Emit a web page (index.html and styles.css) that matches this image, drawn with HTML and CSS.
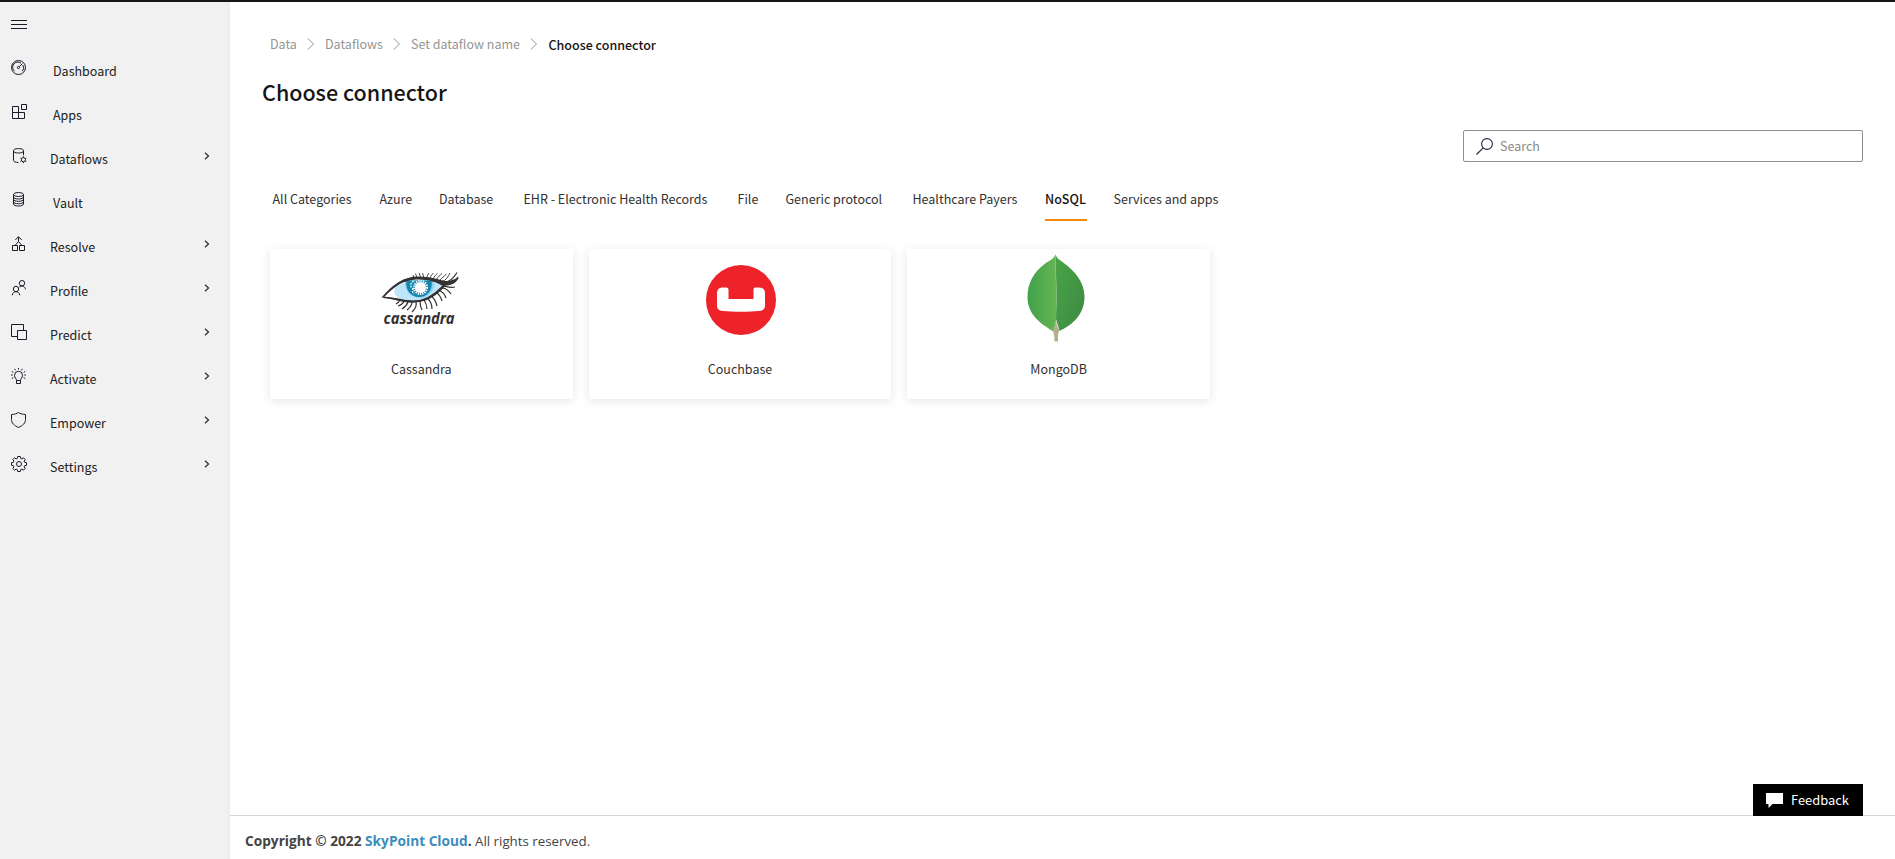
FILE: index.html
```html
<!DOCTYPE html>
<html lang="en">
<head>
<meta charset="utf-8">
<title>Choose connector</title>
<link rel="stylesheet" href="styles.css">
</head>
<body>
<div class="app">
  <aside class="sidebar">
    <div class="menu-toggle">
      <svg class="icon" viewBox="0 0 16 16"><path d="M0 3.500h16M0 7.500h16M0 11.500h16"/></svg>
    </div>
    <nav class="nav">
      <a class="nav-item leaf">
        <svg class="icon" viewBox="0 0 16 16"><circle cx="7.500" cy="7.500" r="7"/><path d="M3.600 11.200A5 5 0 0 1 10 3.200M11.800 5A5 5 0 0 1 11.400 11.200M8.300 6.700l3-3"/><circle cx="7.500" cy="7.500" r="1.100"/></svg>
        <span class="label">Dashboard</span>
      </a>
      <a class="nav-item leaf">
        <svg class="icon" viewBox="0 0 16 16"><path d="M1.500 2.500h6v12h-6zM1.500 8.500h12v6h-12M10.500.5h5v5h-5z"/></svg>
        <span class="label">Apps</span>
      </a>
      <a class="nav-item">
        <svg class="icon" viewBox="0 0 16 16"><ellipse cx="7.500" cy="2.800" rx="5" ry="2.200"/><path d="M2.500 2.800v9.500c0 1.200 2 2.200 5 2.200M12.500 2.800v4.500"/><circle cx="12.400" cy="11.700" r="2.100"/><path d="M12.400 8.300v1.300M12.400 13.800v1.300M9.500 10l1.100.7M14.200 12.700l1.100.7M9.500 13.400l1.100-.7M14.200 10.700l1.100-.7"/></svg>
        <span class="label">Dataflows</span>
        <svg class="chev" viewBox="0 0 6 8"><path d="M1 .7 4.500 4 1 7.300"/></svg>
      </a>
      <a class="nav-item leaf">
        <svg class="icon" viewBox="0 0 16 16"><ellipse cx="7.500" cy="2.500" rx="5" ry="2"/><path d="M2.500 2.500v9.500c0 1.200 2.200 2 5 2s5-.8 5-2V2.500M2.500 5c0 1.200 2.200 2 5 2s5-.8 5-2M2.500 7.300c0 1.200 2.200 2 5 2s5-.8 5-2M2.500 9.700c0 1.200 2.200 2 5 2s5-.8 5-2"/></svg>
        <span class="label">Vault</span>
      </a>
      <a class="nav-item">
        <svg class="icon" viewBox="0 0 16 16"><path d="M1.500 9.500h5v5h-5zM8.500 9.500h5v5h-5zM7.500 1v5M4.300 4l3.200-3.300L10.700 4M4 9.500l3.500-4 3.500 4"/></svg>
        <span class="label">Resolve</span>
        <svg class="chev" viewBox="0 0 6 8"><path d="M1 .7 4.500 4 1 7.300"/></svg>
      </a>
      <a class="nav-item">
        <svg class="icon" viewBox="0 0 16 16"><circle cx="11" cy="3.200" r="2.700"/><circle cx="5" cy="9" r="2.700"/><path d="M1.300 15.300c0-2.200 1.700-3.600 3.700-3.600s3.700 1.400 3.700 3.600M8.300 6.900c2.700-1.800 6-.5 6.200 2.500"/></svg>
        <span class="label">Profile</span>
        <svg class="chev" viewBox="0 0 6 8"><path d="M1 .7 4.500 4 1 7.300"/></svg>
      </a>
      <a class="nav-item">
        <svg class="icon" viewBox="0 0 16 16"><path d="M6 12.500H.5V.5h12V6M6.500 6.500h9v9h-9z"/></svg>
        <span class="label">Predict</span>
        <svg class="chev" viewBox="0 0 6 8"><path d="M1 .7 4.500 4 1 7.300"/></svg>
      </a>
      <a class="nav-item">
        <svg class="icon" viewBox="0 0 16 16"><path d="M5.500 12.500c0-2-2-2.600-2-5.200a4 4 0 0 1 8 0c0 2.600-2 3.200-2 5.200zM5.500 12.500v3h4v-3M7.500 0v1.500M3.700.8l.9 1.600M11.300.8l-.9 1.600M.8 3.500l1.600.9M14.200 3.500l-1.600.9M0 7h1.700M13.300 7H15M.8 10.500l1.600-.9M14.200 10.500l-1.600-.9"/></svg>
        <span class="label">Activate</span>
        <svg class="chev" viewBox="0 0 6 8"><path d="M1 .7 4.500 4 1 7.300"/></svg>
      </a>
      <a class="nav-item">
        <svg class="icon" viewBox="0 0 16 16"><path d="M7.500.5C5.700 1.700 3.300 2.400.5 2.500v5c0 3.500 2.500 6 7 8 4.500-2 7-4.500 7-8v-5C11.700 2.400 9.300 1.700 7.500.5z"/></svg>
        <span class="label">Empower</span>
        <svg class="chev" viewBox="0 0 6 8"><path d="M1 .7 4.500 4 1 7.300"/></svg>
      </a>
      <a class="nav-item">
        <svg class="icon" viewBox="0 0 16 16"><circle cx="8" cy="8" r="2.500"/><path d="M6.700.5h2.600l.4 1.900 1.200.5 1.600-1.100 1.700 1.700-1.100 1.600.5 1.200 1.900.4v2.600l-1.900.4-.5 1.200 1.100 1.600-1.700 1.700-1.600-1.100-1.200.5-.4 1.900H6.700l-.4-1.900-1.200-.5-1.600 1.100-1.700-1.700 1.100-1.600-.5-1.200L.5 9.300V6.700l1.900-.4.5-1.200-1.100-1.600 1.700-1.700 1.600 1.100 1.200-.5z"/></svg>
        <span class="label">Settings</span>
        <svg class="chev" viewBox="0 0 6 8"><path d="M1 .7 4.500 4 1 7.300"/></svg>
      </a>
    </nav>
  </aside>
  <div class="page">
    <main class="content">
      <div class="breadcrumb">
        <a>Data</a>
        <svg class="crumb-sep" viewBox="0 0 8 12"><path d="M.8.500 6.500 6 .8 11.500"/></svg>
        <a>Dataflows</a>
        <svg class="crumb-sep" viewBox="0 0 8 12"><path d="M.8.500 6.500 6 .8 11.500"/></svg>
        <a>Set dataflow name</a>
        <svg class="crumb-sep" viewBox="0 0 8 12"><path d="M.8.500 6.500 6 .8 11.500"/></svg>
        <span class="current">Choose connector</span>
      </div>
      <h1 class="title">Choose connector</h1>
      <div class="search">
        <svg class="search-icon" viewBox="0 0 17 17"><circle cx="11" cy="6" r="5.400"/><path d="M7.200 9.800.5 16.500"/></svg>
        <span>Search</span>
      </div>
      <div class="tabs">
        <span>All Categories</span>
        <span>Azure</span>
        <span>Database</span>
        <span>EHR - Electronic Health Records</span>
        <span>File</span>
        <span>Generic protocol</span>
        <span>Healthcare Payers</span>
        <span class="active">NoSQL</span>
        <span>Services and apps</span>
      </div>
      <div class="cards">
        <div class="card">
          <div class="logo logo-cassandra">
            <svg width="80" height="64" viewBox="0 0 80 64">
              <path d="M2 27C14 15 24 8 38 8c12 0 22 2 30 6-8 8-17 17-34 17C22 31 14 27 2 27z" fill="#fff"/>
              <path d="M15 17C23 9 50 4 65 14c-8 8-17 17-32 17-9 0-16-4-18-8-.8-2-.6-4 0-6z" fill="#bfe5fa"/>
              <path d="M25 9.500h29c1.500 11-6 17.500-14 17.500S24 20 25 9.500z" fill="#8fd0ee"/>
              <path d="M26.500 9.500h25c1.500 9.500-4 16.500-12.500 16.500S25 19 26.500 9.500z" fill="#1685ad"/>
              <circle cx="40.500" cy="16.500" r="5.500" fill="#fff"/>
              <circle cx="40.500" cy="16.500" r="6.500" fill="none" stroke="#fff" stroke-width="2.200" stroke-dasharray="1.300 1"/>
              <path d="M34 10c-4 2-4 5-2 7s-1 4 2 6" fill="none" stroke="#e5f5fc" stroke-width="1.300" stroke-dasharray="2 1"/>
              <path d="M1.500 26.500C13 13 24 5.500 38 5.500c12 0 20 3 30 5l11-4c-3 6-8 8-13 8-7 7-15 16-31 17-12 1-20-4-33.500-5zC14 25.500 23 29.500 33 29.500c14 0 22-6 30-14.500C52 8 30 4 14 17 9 21 6 24 4 26.300z" fill="#343132"/>
              <path d="M4 26.600c9-.6 15 4 29 4 13 0 22-7 30-15.500" fill="none" stroke="#343132" stroke-width="1.500"/>
              <path d="M34 7l-1-3M37 7l-1.500-4.500M41 7l-2-5M44 7l-1.500-5M47 7c0-2 1-4 2-5M50 7.500c1-3 2-4 3.500-5.500M53 8.500c1-3 3-5 4.500-6M56 9c2-3 4-5 6-6.500M59 10c3-3 5-5 7.500-7M62 11c4-2 6-5 8-9" fill="none" stroke="#343132" stroke-width=".9"/>
              <path d="M65 11.500c5-1 9-5 12-10M66 13c6 0 9-3 12-7M64 15c4 1 7 2 11 1M63 17c4 1 6 3 8 6M60 20c3 1 5 4 6 7M57 22c3 2 4 5 5 8M52 26c3 2 4 5 5 9M48 28c3 3 4 6 4 10M44 29c2 3 3 6 3 9M40 30c0 4 1 7 2 9M36 31c1 3 0 6-4 10M32 31c0 3-1 5-5 8M28 31c-1 3-3 5-6 7M24 30c-1 3-3 4-6 5M20 29c-1 2-2 3-4 4" fill="none" stroke="#343132" stroke-width="1.200"/>
              <text x="39" y="53" text-anchor="middle" textLength="71" lengthAdjust="spacingAndGlyphs" class="logo-word">cassandra</text>
            </svg>
          </div>
          <span>Cassandra</span>
        </div>
        <div class="card">
          <div class="logo logo-couchbase">
            <svg width="70" height="70" viewBox="0 0 70 70">
              <circle cx="35" cy="35" r="35" fill="#ee2329"/>
              <path d="M17 22.500c2 0 5.500-.5 5.500 2V34h25v-9.500c0-2.500 3-2 5.500-2 4 0 6 2 6 6V40c0 4-1.500 5.500-6 6-10 1-26 1-36 0-4.500-.5-6-2-6-6V28.500c0-4 2-6 6-6z" fill="#fff"/>
            </svg>
          </div>
          <span>Couchbase</span>
        </div>
        <div class="card">
          <div class="logo logo-mongodb">
            <svg width="58" height="88" viewBox="0 0 58 88">
              <defs>
                <linearGradient id="leaf-left"><stop offset="0" stop-color="#41a149"/><stop offset="1" stop-color="#65b554"/></linearGradient>
                <linearGradient id="leaf-right" x2="1" y2="1"><stop offset="0" stop-color="#4aa447"/><stop offset="1" stop-color="#3d8a42"/></linearGradient>
              </defs>
              <path d="M28.500 0c-1 5-6 6-11 10C7 18 .5 29 .5 43c0 17 12 26 26 34.500L29.500 65z" fill="url(#leaf-left)"/>
              <path d="M28.500 0c1 4 3 5 7 8C48 17 57.500 28 57.500 43c0 17-12 28-25 34L29 65c1-22 0-40-.5-65z" fill="url(#leaf-right)"/>
              <path d="M29 65c.5 5 1.500 9 3.500 11.500-1.500 1.500-1.500 6-1.500 11h-3.500c0-5-.5-9-2-11C27.500 74 28.500 70 29 65z" fill="#b5ae8c"/>
            </svg>
          </div>
          <span>MongoDB</span>
        </div>
      </div>
      <div class="feedback">
        <svg class="bubble" viewBox="0 0 17 15"><path d="M0 0h17v11H6.500L2.500 15v-4H0z"/></svg>
        <span>Feedback</span>
      </div>
    </main>
    <footer class="footer"><b>Copyright © 2022 <a>SkyPoint Cloud</a>.</b> All rights reserved.</footer>
  </div>
</div>
</body>
</html>
```
FILE: styles.css
```css
* { box-sizing: border-box; }
body {
  margin: 0;
  background: #fff;
  color: #222;
  font: 12.5px/20px "Noto Sans CJK SC", "Noto Sans", sans-serif;
}
.app {
  display: flex;
  height: 859px;
  border-top: 2px solid #171515;
  overflow: hidden;
}
.sidebar {
  flex: 0 0 230px;
  background: linear-gradient(to right, #f1f1f1 226px, #ebebeb);
}
.menu-toggle { height: 47px; padding: 15px 0 0 11px; }
.icon { display: block; width: 16px; height: 16px; fill: none; stroke: #1b1a2a; stroke-width: 1; }
.nav-item { display: flex; align-items: center; height: 44px; padding: 0 20px 0 11px; }
.nav-item .icon { flex: none; margin-bottom: 6px; }
.label { flex: 1; padding-left: 23px; }
.leaf .label { padding-left: 26px; }
.chev { width: 6px; height: 8px; margin-bottom: 6px; fill: none; stroke: #333; stroke-width: 1.300; }
.page { flex: 1; display: flex; flex-direction: column; }
.content { position: relative; flex: 1; padding: 31px 32px 0 40px; }
.breadcrumb {
  display: grid;
  grid-template-columns: 37px 18px 68px 18px 119px 18.500px auto;
  height: 22px;
  align-items: center;
  color: #979593;
}
.crumb-sep { width: 8px; height: 12px; fill: none; stroke: #979593; stroke-width: 1; }
.current { padding-top: 1px; color: #171515; font-weight: 500; }
.title { margin: 22px 0 0 -8px; font-size: 21.500px; line-height: 30px; font-weight: 500; color: #171515; }
.search {
  display: flex;
  align-items: center;
  gap: 7px;
  width: 400px;
  height: 32px;
  margin: 23px 0 0 auto;
  padding-left: 12px;
  border: 1px solid #8f8f8f;
  border-radius: 2px;
  color: #8a8886;
}
.search-icon { width: 17px; height: 17px; fill: none; stroke: #2b2040; stroke-width: 1.100; }
.tabs {
  display: grid;
  grid-template-columns: 107px 59.500px 84.500px 214px 48px 127px 132.500px 68.500px auto;
  height: 43px;
  margin: 16px 0 0 2.500px;
  line-height: 42px;
  color: #323130;
}
.active { width: 42px; height: 43px; color: #171515; font-weight: 500; border-bottom: 2px solid #f5890b; }
.cards { display: grid; grid-template-columns: repeat(3, 302.670px); gap: 16px; margin-top: 28px; }
.card {
  display: flex;
  flex-direction: column;
  align-items: center;
  height: 150px;
  background: #fff;
  box-shadow: 0 2px 10px rgba(0, 0, 0, .1);
  color: #323130;
}
.logo { display: flex; align-items: flex-start; justify-content: center; height: 110px; }
.logo-cassandra { padding: 22px 2px 0 0; }
.logo-couchbase { padding: 16px 0 0 2px; }
.logo-mongodb { padding: 5px 5px 0 0; }
.logo-word { font: italic bold 16px "Noto Sans", sans-serif; fill: #343132; }
.feedback {
  position: absolute;
  right: 32px;
  bottom: -1px;
  display: flex;
  align-items: center;
  gap: 8px;
  width: 110px;
  height: 32px;
  padding-left: 13px;
  background: #000;
  color: #fff;
  font-size: 12.900px;
}
.bubble { width: 17px; height: 15px; fill: #fff; }
.footer {
  height: 44px;
  padding: 15px;
  border-top: 1px solid #d2d6de;
  color: #444;
  font: 13.300px/20px "Open Sans", sans-serif;
}
.footer b { font-size: 13.700px; }
.footer a { color: #3c8dbc; }
```
